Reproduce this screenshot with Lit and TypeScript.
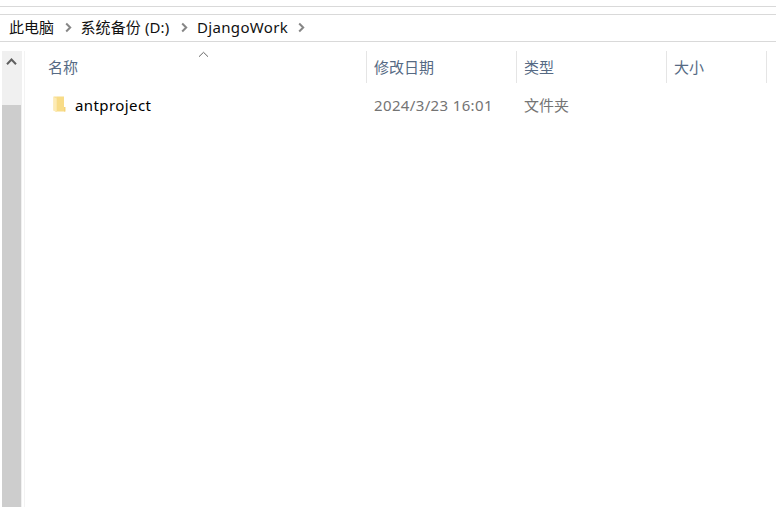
import { LitElement, html, css, svg } from "lit";
import { customElement } from "lit/decorators.js";

const separator = html`<svg class="sep" width="7" height="11" viewBox="0 0 7 11">
  <path d="M1.2 1.5 L5.2 5.5 L1.2 9.5" fill="none" stroke="#868686" stroke-width="2" />
</svg>`;

const folder = svg`
  <path d="M4 0.5 H11 V11 H12.3 V15.5 H4 Z" fill="#f8dc88" />
  <path d="M11 11 H12.3 V15.5 H11 Z" fill="#f5d27a" />
  <path d="M0.5 0.5 H4 V15.5 L3.6 16 L0.5 14.6 Z" fill="#f8df96" />
  <path d="M0.5 1 L3.6 2.4 V16 L0.5 14.6 Z" fill="#fdebb5" />`;

@customElement("app-root")
export class AppRoot extends LitElement {
  static styles = css`
    :host {
      display: flex;
      flex-direction: column;
      box-sizing: border-box;
      height: 100vh;
      overflow: hidden;
      padding-top: 6px;
      background: #fff;
      color: #111;
      font: 15px/20px "Noto Sans", "Noto Sans CJK SC", sans-serif;
      white-space: nowrap;
    }
    svg { display: block; flex: none; }
    .top { flex: none; height: 7px; border-top: 1px solid #d9d9d9; }
    .path {
      flex: none;
      display: flex;
      align-items: center;
      box-sizing: border-box;
      height: 28px;
      padding: 0 0 2px 9px;
      border-top: 1px solid #d9d9d9;
      border-bottom: 1px solid #d9d9d9;
    }
    .sep { margin: 1px 9px 0 10px; }
    .crumb.drive { width: 90px; letter-spacing: 0.1px; }
    .crumb.pc { width: 45.5px; }
    .crumb.dir { width: 90.5px; margin-left: 0.5px; letter-spacing: 0.33px; }
    .main { flex: 1; display: flex; min-height: 0; padding: 9px 0 0 2px; }
    .scroll { width: 20px; background: #f0f0f0; display: flex; flex-direction: column; }
    .arrow { height: 54px; box-sizing: border-box; padding: 6px 0 0 4px; }
    .thumb { flex: 1; width: 19px; background: #cdcdcd; }
    .edge { width: 2px; box-sizing: border-box; margin-left: 1px; border-right: 1px solid #f3f3f3; }
    .list { flex: 1; }
    .row { display: grid; grid-template-columns: 342px 150px 150px 100px; }
    .head { height: 32px; color: #566a84; }
    .head .cell {
      position: relative;
      display: flex;
      align-items: center;
      box-sizing: border-box;
      padding-left: 7px;
      border-right: 1px solid #e5e5e5;
    }
    .head .cell:first-child { padding-left: 23px; }
    .sort { position: absolute; left: 173px; top: 0; }
    .file { margin-top: 12px; height: 20px; color: #747474; }
    .file .cell { display: flex; align-items: center; padding-left: 7px; }
    .file .name { padding-left: 28px; gap: 8px; color: #000; }
    .file .date { letter-spacing: 0.36px; }
    .icon { width: 14px; height: 17px; margin-bottom: 2px; }
    .title { letter-spacing: 0.42px; }
  `;

  render() {
    return html`
      <div class="top"></div>
      <nav class="path">
        <span class="crumb pc">此电脑</span>${separator}
        <span class="crumb drive">系统备份 (D:)</span>${separator}
        <span class="crumb dir">DjangoWork</span>${separator}
      </nav>
      <div class="main">
        <div class="scroll">
          <div class="arrow">
            <svg width="11" height="9" viewBox="0 0 11 9">
              <path d="M1 7.2 L5.5 2.5 L10 7.2" fill="none" stroke="#606060" stroke-width="2" />
            </svg>
          </div>
          <div class="thumb"></div>
        </div>
        <div class="edge"></div>
        <div class="list">
          <div class="row head">
            <div class="cell">
              名称
              <svg class="sort" width="11" height="7" viewBox="0 0 11 7">
                <path d="M1 5.7 L5.5 1.3 L10 5.7" fill="none" stroke="#666" stroke-width="1" />
              </svg>
            </div>
            <div class="cell">修改日期</div>
            <div class="cell">类型</div>
            <div class="cell">大小</div>
          </div>
          <div class="row file">
            <div class="cell name">
              <svg class="icon" viewBox="0 0 14 17">${folder}</svg>
              <span class="title">antproject</span>
            </div>
            <div class="cell date">2024/3/23 16:01</div>
            <div class="cell">文件夹</div>
          </div>
        </div>
      </div>
    `;
  }
}
